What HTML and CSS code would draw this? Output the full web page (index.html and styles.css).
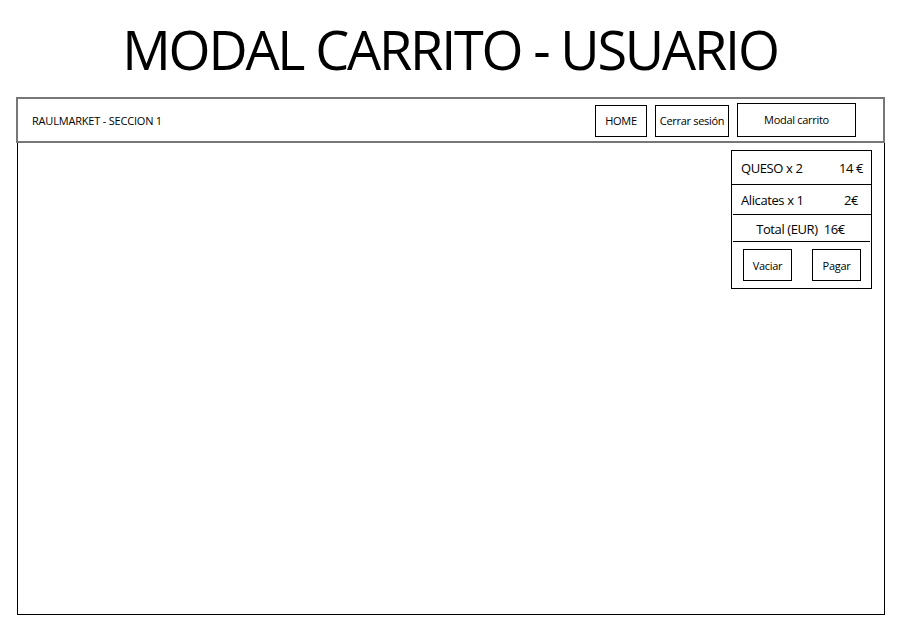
FILE: index.html
```html
<!DOCTYPE html>
<html lang="es">
<head>
<meta charset="utf-8">
<title>Modal carrito - usuario</title>
<link rel="stylesheet" href="styles.css">
</head>
<body>
  <h1 class="title">MODAL CARRITO - USUARIO</h1>
  <div class="frame">
    <header class="navbar">
      <span class="brand">RAULMARKET - SECCION 1</span>
      <nav class="nav">
        <button class="nav-btn btn-home">HOME</button>
        <button class="nav-btn btn-logout">Cerrar sesión</button>
        <button class="nav-btn btn-cart">Modal carrito</button>
      </nav>
    </header>
    <main class="content">
      <div class="cart">
        <div class="cart-row row-first"><span>QUESO x 2</span><span class="price">14 €</span></div>
        <div class="cart-row row-second"><span>Alicates x 1</span><span class="price price-2">2€</span></div>
        <div class="cart-total"><span>Total (EUR)</span><span>16€</span></div>
        <div class="cart-actions">
          <button class="cart-btn">Vaciar</button>
          <button class="cart-btn">Pagar</button>
        </div>
      </div>
    </main>
  </div>
</body>
</html>
```
FILE: styles.css
```css
* { box-sizing: border-box; }
html, body { margin: 0; padding: 0; background: #fff; }
body {
  font-family: "Open Sans", "Noto Sans", sans-serif;
  color: #000;
  width: 900px;
  height: 629px;
  overflow: hidden;
}
.title {
  margin: 0;
  height: 97px;
  padding-top: 17px;
  text-align: center;
  font-weight: 400;
  font-size: 54px;
  line-height: 64px;
  letter-spacing: -2.2px;
}
.frame {
  margin-left: 16px;
  width: 869px;
}
.navbar {
  height: 46px;
  border: 2px solid #777;
  display: flex;
  align-items: center;
  justify-content: space-between;
  padding-left: 14px;
  padding-right: 27px;
}
.brand {
  font-size: 11px;
  letter-spacing: -0.2px;
}
.nav {
  display: flex;
  align-items: center;
  gap: 8px;
}
.nav-btn {
  font-family: inherit;
  font-size: 11px;
  letter-spacing: -0.3px;
  background: #fff;
  color: #000;
  border: 1px solid #000;
  border-radius: 0;
  padding: 0;
  height: 32px;
  margin-top: 1px;
}
.btn-home { width: 52px; }
.btn-logout { width: 74px; }
.btn-cart { width: 119px; height: 34px; margin-top: -1px; padding-bottom: 1px; }
.content {
  position: relative;
  height: 472px;
  border: 1px solid #000;
  border-top: none;
  margin-left: 1px;
}
.cart {
  position: absolute;
  top: 7px;
  right: 12px;
  width: 141px;
  height: 139px;
  border: 1px solid #000;
  font-size: 13px;
  letter-spacing: -0.4px;
}
.cart-row {
  display: flex;
  justify-content: space-between;
  align-items: center;
  padding: 0 8px 0 9px;
  border-bottom: 1px solid #000;
}
.row-first { height: 34px; }
.row-second { height: 30px; margin-left: 1px; padding-left: 8px; }
.price-2 { margin-right: 5px; }
.cart-total {
  height: 27px;
  display: flex;
  justify-content: center;
  align-items: center;
  gap: 6px;
  border-bottom: 1px solid #000;
  margin: 0 1px;
  padding-right: 2px;
  padding-top: 1px;
}
.cart-actions {
  display: flex;
  justify-content: space-between;
  padding: 7px 10px 0 11px;
}
.cart-btn {
  font-family: inherit;
  font-size: 11px;
  letter-spacing: -0.3px;
  width: 49px;
  height: 32px;
  background: #fff;
  color: #000;
  border: 1px solid #000;
  border-radius: 0;
  padding: 0;
}
```
